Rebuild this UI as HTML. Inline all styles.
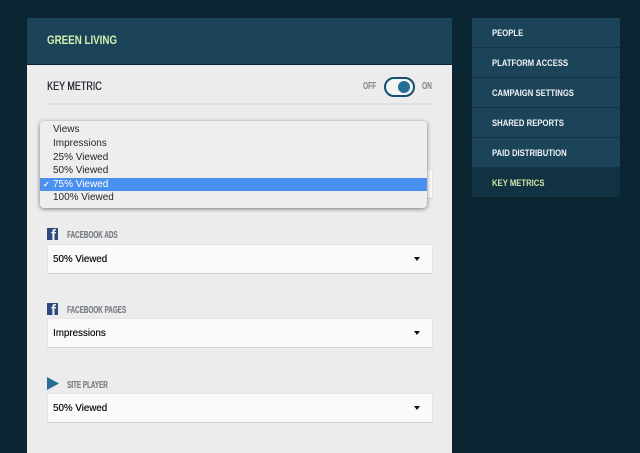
<!DOCTYPE html>
<html>
<head>
<meta charset="utf-8">
<style>
html,body{margin:0;padding:0;}
body{width:640px;height:453px;overflow:hidden;background:#0b2533;position:relative;font-family:"Liberation Sans",sans-serif;}
.abs{position:absolute;white-space:nowrap;transform-origin:left top;}
.panel{position:absolute;left:27px;top:18px;width:425px;height:435px;background:#ececec;}
.head{position:absolute;left:27px;top:18px;width:425px;height:47px;background:#1b4459;border-bottom:1px solid #0b2230;box-sizing:border-box;}
.title{left:47px;top:34px;font-size:11.5px;line-height:14px;font-weight:bold;color:#d5edb0;transform:scaleX(.85);}
.km{left:47px;top:80px;font-size:11.5px;line-height:14px;color:#22262e;transform:scaleX(.78);text-shadow:.3px 0 0 #22262e;}
.rule{position:absolute;left:47px;top:103px;width:385px;height:2px;background:#e0e0e0;}
.oo{font-size:10px;line-height:11px;font-weight:bold;color:#808080;top:81px;transform:scaleX(.66);}
.toggle{position:absolute;left:384px;top:77px;width:31px;height:20px;box-sizing:border-box;border:2.5px solid #14506f;border-radius:10px;background:#f4f4f4;}
.knob{position:absolute;left:398px;top:81px;width:12px;height:12px;border-radius:50%;background:#246d98;}
.sel{position:absolute;left:47px;width:386px;height:30px;box-sizing:border-box;background:#fafafa;border:1px solid #e4e4e4;border-bottom:1px solid #d2d2d2;}
.sel span{position:absolute;left:5px;top:8px;font-size:10.5px;line-height:13px;color:#0f1114;white-space:nowrap;transform:scaleX(.93);transform-origin:left top;text-shadow:.2px 0 0 #0f1114;}
.sel i{position:absolute;left:366px;top:12px;width:0;height:0;border-left:3.5px solid transparent;border-right:3.5px solid transparent;border-top:4px solid #111;}
.lab{left:67px;font-size:10.5px;line-height:12px;font-weight:bold;color:#80858b;transform:scaleX(.6);text-shadow:.4px 0 0 #80858b;}
.fb{position:absolute;left:47px;width:11px;height:12px;background:#2c4a80;overflow:hidden;}
.fb b{position:absolute;left:4px;top:0;font:bold 15px/15px "Liberation Sans",sans-serif;color:#f0f0f0;}
.menu{position:absolute;left:40px;top:121px;width:387px;height:87px;background:#eeeeee;border-radius:4px;box-shadow:0 1px 4px rgba(0,0,0,.5);}
.menu div{position:absolute;left:0;width:387px;height:13.6px;box-sizing:border-box;font-size:10.5px;line-height:13.6px;color:#24262a;}
.menu div span{position:absolute;left:13px;top:0;white-space:nowrap;transform:scaleX(.95);transform-origin:left top;}
.menu .on{background:#4a90ee;color:#fff;}
.menu .on u{position:absolute;left:3px;top:0;text-decoration:none;font-size:8px;font-weight:bold;}
.side{position:absolute;left:472px;top:18px;width:148px;height:179px;background:#1c4459;}
.side div{position:absolute;left:0;width:148px;height:30px;box-sizing:border-box;border-bottom:1px solid #123347;}
.side div span{position:absolute;left:20px;top:1px;font-size:9.5px;line-height:29px;font-weight:bold;color:#eef2f4;white-space:nowrap;transform:scaleX(.81);transform-origin:left top;}
.side .act{background:#123143;border-bottom:0;height:29px;}
.side .act span{color:#cfe6a6;}
</style>
</head>
<body>
<div class="panel"></div>
<div class="head"></div>
<div class="abs title">GREEN LIVING</div>
<div class="abs km">KEY METRIC</div>
<div class="rule"></div>
<div class="abs oo" style="left:363px">OFF</div>
<div class="toggle"></div>
<div class="knob"></div>
<div class="abs oo" style="left:422px">ON</div>

<div class="sel" style="top:169px"></div>

<div class="fb" style="top:228px"><b>f</b></div>
<div class="abs lab" style="top:229px">FACEBOOK ADS</div>
<div class="sel" style="top:244px"><span>50% Viewed</span><i></i></div>

<div class="fb" style="top:303px"><b>f</b></div>
<div class="abs lab" style="top:304px">FACEBOOK PAGES</div>
<div class="sel" style="top:318px"><span>Impressions</span><i></i></div>

<svg style="position:absolute;left:47px;top:377px" width="12" height="13"><path d="M0 0L12 6.5L0 13Z" fill="#2a6f94"/></svg>
<div class="abs lab" style="top:379px">SITE PLAYER</div>
<div class="sel" style="top:393px"><span>50% Viewed</span><i></i></div>

<div class="menu">
<div style="top:2.4px"><span>Views</span></div>
<div style="top:16px"><span>Impressions</span></div>
<div style="top:29.6px"><span>25% Viewed</span></div>
<div style="top:43.2px"><span>50% Viewed</span></div>
<div class="on" style="top:56.8px"><u>✓</u><span>75% Viewed</span></div>
<div style="top:70.4px"><span>100% Viewed</span></div>
</div>

<div class="side">
<div style="top:0"><span>PEOPLE</span></div>
<div style="top:30px"><span>PLATFORM ACCESS</span></div>
<div style="top:60px"><span>CAMPAIGN SETTINGS</span></div>
<div style="top:90px"><span>SHARED REPORTS</span></div>
<div style="top:120px"><span>PAID DISTRIBUTION</span></div>
<div class="act" style="top:150px"><span>KEY METRICS</span></div>
</div>
</body>
</html>
